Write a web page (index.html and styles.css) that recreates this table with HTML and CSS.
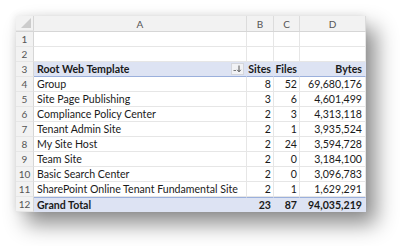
FILE: index.html
```html
<!DOCTYPE html>
<html>
<head>
<meta charset="utf-8">
<link rel="stylesheet" href="styles.css">
</head>
<body>
<div class="stage">
  <div class="sheet">
    <div class="row head">
      <div class="rn corner"><span class="tri"></span></div>
      <div class="c a ch">A</div>
      <div class="c b ch">B</div>
      <div class="c cc ch">C</div>
      <div class="c d ch">D</div>
    </div>
    <div class="row"><div class="rn">1</div><div class="c a"></div><div class="c b"></div><div class="c cc"></div><div class="c d"></div></div>
    <div class="row"><div class="rn">2</div><div class="c a"></div><div class="c b"></div><div class="c cc"></div><div class="c d"></div></div>
    <div class="row pv top">
      <div class="rn">3</div>
      <div class="c a"><span>Root Web Template</span><span class="sort"><svg width="9" height="8" viewBox="0 0 9 8"><path d="M0.5 5.5h2.5" stroke="#777" stroke-width="1"/><path d="M6 0.5v6M4.2 4.8L6 6.8 7.8 4.8" stroke="#555" stroke-width="1" fill="none"/></svg></span></div>
      <div class="c b n">Sites</div>
      <div class="c cc n">Files</div>
      <div class="c d n">Bytes</div>
    </div>
    <div class="row"><div class="rn">4</div><div class="c a">Group</div><div class="c b n">8</div><div class="c cc n">52</div><div class="c d n">69,680,176</div></div>
    <div class="row"><div class="rn">5</div><div class="c a">Site Page Publishing</div><div class="c b n">3</div><div class="c cc n">6</div><div class="c d n">4,601,499</div></div>
    <div class="row"><div class="rn">6</div><div class="c a">Compliance Policy Center</div><div class="c b n">2</div><div class="c cc n">3</div><div class="c d n">4,313,118</div></div>
    <div class="row"><div class="rn">7</div><div class="c a">Tenant Admin Site</div><div class="c b n">2</div><div class="c cc n">1</div><div class="c d n">3,935,524</div></div>
    <div class="row"><div class="rn">8</div><div class="c a">My Site Host</div><div class="c b n">2</div><div class="c cc n">24</div><div class="c d n">3,594,728</div></div>
    <div class="row"><div class="rn">9</div><div class="c a">Team Site</div><div class="c b n">2</div><div class="c cc n">0</div><div class="c d n">3,184,100</div></div>
    <div class="row"><div class="rn">10</div><div class="c a">Basic Search Center</div><div class="c b n">2</div><div class="c cc n">0</div><div class="c d n">3,096,783</div></div>
    <div class="row"><div class="rn">11</div><div class="c a">SharePoint Online Tenant Fundamental Site</div><div class="c b n">2</div><div class="c cc n">1</div><div class="c d n">1,629,291</div></div>
    <div class="row pv total">
      <div class="rn">12</div>
      <div class="c a">Grand Total</div>
      <div class="c b n">23</div>
      <div class="c cc n">87</div>
      <div class="c d n">94,035,219</div>
    </div>
  </div>
</div>
</body>
</html>
```

FILE: styles.css
```css
html, body {
  margin: 0;
  padding: 0;
  background: #ffffff;
}
.stage {
  width: 400px;
  height: 246px;
  padding: 16px 0 0 16px;
  box-sizing: border-box;
  overflow: hidden;
}
.sheet {
  width: 350px;
  background: #ffffff;
  box-shadow: 10px 12px 20px rgba(0, 0, 0, 0.45), -1px -1px 7px rgba(0, 0, 0, 0.08);
  font-family: "Lato", "Open Sans", sans-serif;
  font-size: 10.6px;
  color: #1a1a1a;
}
.row {
  display: grid;
  grid-template-columns: 18px 213px 27px 26px 66px;
  height: 15px;
}
.row.head {
  height: 15px;
  background: #f2f2f2;
  border-bottom: 1px solid #d6d6d6;
}
.rn {
  display: flex;
  align-items: center;
  justify-content: center;
  background: #f2f2f2;
  color: #555;
  font-size: 10px;
  border-right: 1px solid #d6d6d6;
  border-bottom: 1px solid #e6e6e6;
  box-sizing: border-box;
}
.corner {
  position: relative;
}
.tri {
  position: absolute;
  right: 2px;
  bottom: 2px;
  width: 0;
  height: 0;
  border-left: 10px solid transparent;
  border-bottom: 10px solid #cccccc;
}
.c {
  display: flex;
  align-items: center;
  padding: 0 3px;
  box-sizing: border-box;
  border-right: 1px solid #e6e6e6;
  border-bottom: 1px solid #e6e6e6;
  white-space: nowrap;
  overflow: hidden;
}
.ch {
  justify-content: center;
  color: #555;
  font-size: 10px;
  border-right: 1px solid #dcdcdc;
  border-bottom: none;
}
.n {
  justify-content: flex-end;
}
.b.n, .cc.n {
  padding: 0 2px;
}
.pv .c {
  background: #dde3f3;
  font-weight: 700;
  border-right-color: #dde3f3;
}
.pv.top .c {
  border-bottom: 1px solid #9bb0dc;
}
.pv.total .c {
  border-top: 1px solid #9bb0dc;
  border-bottom: 1px solid #dde3f3;
}
.pv .c.a {
  justify-content: space-between;
}
.sort {
  display: flex;
  align-items: center;
  justify-content: center;
  width: 11px;
  height: 10px;
  margin-right: -1px;
  background: #f1f2f5;
  border: 1px solid #d4d6dc;
}
```
